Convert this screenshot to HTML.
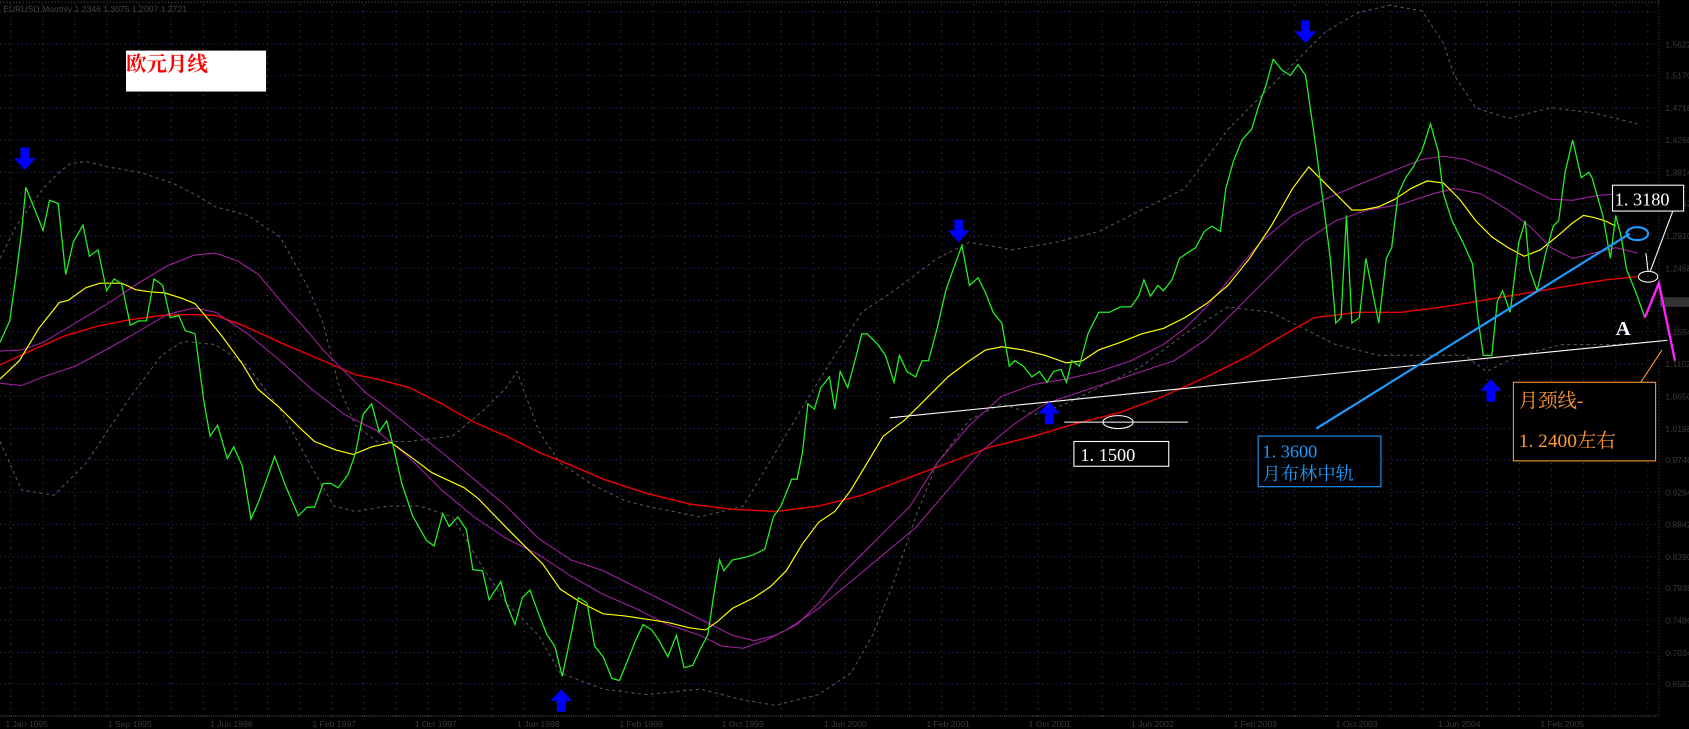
<!DOCTYPE html>
<html><head><meta charset="utf-8"><style>
html,body{margin:0;padding:0;background:#000;overflow:hidden}
svg{display:block}
text{font-family:"Liberation Sans","Noto Sans CJK SC",sans-serif}
.cj{font-family:"Liberation Serif","Noto Serif CJK SC",serif}
</style></head><body>
<svg width="1689" height="729" viewBox="0 0 1568 677" preserveAspectRatio="none" xmlns="http://www.w3.org/2000/svg">
<rect width="1568" height="677" fill="#000"/>
<g stroke="#2a2a6a" stroke-width="1" stroke-dasharray="1,3">
<line x1="0" y1="11" x2="1537" y2="11"/><line x1="0" y1="41" x2="1537" y2="41"/><line x1="0" y1="70" x2="1537" y2="70"/><line x1="0" y1="100" x2="1537" y2="100"/><line x1="0" y1="130" x2="1537" y2="130"/><line x1="0" y1="160" x2="1537" y2="160"/><line x1="0" y1="189" x2="1537" y2="189"/><line x1="0" y1="219" x2="1537" y2="219"/><line x1="0" y1="249" x2="1537" y2="249"/><line x1="0" y1="279" x2="1537" y2="279"/><line x1="0" y1="308" x2="1537" y2="308"/><line x1="0" y1="338" x2="1537" y2="338"/><line x1="0" y1="368" x2="1537" y2="368"/><line x1="0" y1="398" x2="1537" y2="398"/><line x1="0" y1="427" x2="1537" y2="427"/><line x1="0" y1="457" x2="1537" y2="457"/><line x1="0" y1="487" x2="1537" y2="487"/><line x1="0" y1="517" x2="1537" y2="517"/><line x1="0" y1="546" x2="1537" y2="546"/><line x1="0" y1="576" x2="1537" y2="576"/><line x1="0" y1="606" x2="1537" y2="606"/><line x1="0" y1="635" x2="1537" y2="635"/>
</g>
<g id="vg" stroke="#444" stroke-width="1" stroke-dasharray="1,5"></g>
<line x1="0" y1="665" x2="1540" y2="665" stroke="#555" stroke-dasharray="1,1"/>
<line x1="1540" y1="0" x2="1540" y2="665" stroke="#444" stroke-dasharray="1,2"/>
<line x1="0" y1="2" x2="1540" y2="2" stroke="#555" stroke-dasharray="1,2"/>
<text x="3" y="11" font-size="8" fill="#444">EURUSD,Monthly  1.2346  1.3075  1.2007  1.2721</text>
<g font-size="8" fill="#3a3a3a">
<text x="1546" y="44">1.5622</text><text x="1546" y="73">1.5170</text><text x="1546" y="103">1.4718</text><text x="1546" y="133">1.4266</text><text x="1546" y="163">1.3814</text><text x="1546" y="192">1.3362</text><text x="1546" y="222">1.2910</text><text x="1546" y="252">1.2458</text><text x="1546" y="311">1.1554</text><text x="1546" y="341">1.1102</text><text x="1546" y="371">1.0650</text><text x="1546" y="401">1.0198</text><text x="1546" y="430">0.9746</text><text x="1546" y="460">0.9294</text><text x="1546" y="490">0.8842</text><text x="1546" y="520">0.8390</text><text x="1546" y="549">0.7938</text><text x="1546" y="579">0.7486</text><text x="1546" y="609">0.7034</text><text x="1546" y="638">0.6582</text>
<rect x="1541" y="276" width="27" height="9" fill="#333"/>
</g>
<g font-size="8" fill="#3a3a3a">
<text x="5" y="675">1 Jan 1995</text><text x="100" y="675">1 Sep 1995</text><text x="195" y="675">1 Jun 1996</text><text x="290" y="675">1 Feb 1997</text><text x="385" y="675">1 Oct 1997</text><text x="480" y="675">1 Jun 1998</text><text x="575" y="675">1 Feb 1999</text><text x="670" y="675">1 Oct 1999</text><text x="765" y="675">1 Jun 2000</text><text x="860" y="675">1 Feb 2001</text><text x="955" y="675">1 Oct 2001</text><text x="1050" y="675">1 Jun 2002</text><text x="1145" y="675">1 Feb 2003</text><text x="1240" y="675">1 Oct 2003</text><text x="1335" y="675">1 Jun 2004</text><text x="1430" y="675">1 Feb 2005</text>
</g>
<g fill="none" stroke="#555" stroke-width="1" stroke-dasharray="3,3">
<polyline points="0,240 15,210 40,175 55,160 65,152 80,150 100,155 130,160 160,170 180,180 200,192 230,200 260,220 285,265 300,300 315,360 330,395 350,410 380,410 420,405 450,380 470,360 480,345 500,400 520,430 550,450 580,465 600,470 650,480 690,470 720,420 750,370 775,330 800,290 830,270 870,240 900,225 940,232 980,225 1020,215 1060,195 1100,175 1140,120 1170,90 1200,60 1230,30 1260,12 1290,5 1320,10 1340,40 1350,70 1370,100 1400,110 1440,100 1480,105 1520,115"/>
<polyline points="0,410 20,455 50,460 80,430 120,370 150,330 170,317 200,320 230,340 260,380 290,435 310,470 330,475 360,470 390,470 420,480 450,530 470,560 500,590 520,625 560,640 600,645 650,640 690,650 720,655 760,645 790,625 810,590 830,540 850,480 870,430 900,390 930,375 960,385 990,375 1020,360 1060,340 1100,310 1140,285 1180,290 1200,300 1240,320 1280,330 1320,330 1360,330 1380,345 1410,330 1450,320 1500,320 1520,318"/>
</g>
<polyline fill="none" stroke="#ee0000" stroke-width="1.3" points="0,339 30,325 60,312 90,303 120,297 150,293 180,292 200,293 225,302 260,318 300,335 330,348 350,352 380,360 410,375 440,392 470,405 500,420 530,432 560,445 600,458 640,468 680,473 720,475 760,470 800,460 840,445 880,430 920,415 960,405 1000,393 1040,383 1080,368 1120,350 1160,330 1190,312 1220,295 1260,290 1300,290 1340,285 1370,280 1400,275 1430,270 1460,265 1490,260 1520,257"/>
<g fill="none" stroke="#a020a0" stroke-width="1">
<polyline points="0,326 20,325 40,318 70,300 100,282 130,262 155,247 180,237 200,235 220,242 240,255 265,285 285,307 300,325 320,345 340,365 360,380 385,400 410,420 440,445 470,470 500,500 530,520 560,530 590,545 620,560 650,575 680,590 700,595 720,590 740,580 760,560 780,535 800,515 820,495 845,470 870,430 900,395 930,368 960,357 990,352 1020,345 1050,335 1080,320 1100,305 1120,285 1145,255 1170,225 1200,200 1230,185 1260,172 1290,160 1320,148 1340,145 1360,148 1390,160 1420,175 1440,185 1460,186 1480,182 1500,180"/>
<polyline points="0,356 20,358 40,350 70,340 100,324 130,307 155,292 180,286 200,290 230,310 260,335 290,362 320,385 350,400 380,425 410,455 440,480 470,500 500,515 530,535 560,552 590,565 620,580 650,590 670,600 690,602 710,595 730,585 760,565 790,540 820,515 850,490 880,455 910,420 940,395 970,375 1000,365 1030,355 1060,345 1090,335 1120,315 1150,285 1180,255 1210,225 1240,205 1270,195 1300,190 1330,180 1350,175 1375,180 1400,195 1420,210 1440,230 1460,240 1480,235 1500,230 1520,235"/>
</g>
<polyline fill="none" stroke="#ffff00" stroke-width="1.1" points="0,352 18,335 36,305 55,281 63,279 80,267 93,263 113,263 126,269 139,271 153,272 169,277 181,282 192,295 206,312 225,338 239,361 259,378 279,398 292,410 312,418 328,422 345,415 363,411 381,424 401,439 431,453 444,463 471,491 487,507 504,524 520,547 540,560 560,570 580,572 600,575 620,578 640,583 655,585 665,578 680,565 700,555 715,545 730,530 745,505 760,485 775,475 790,455 805,430 820,405 840,390 860,370 880,350 900,335 915,325 930,322 950,325 970,330 990,337 1005,335 1020,325 1040,318 1060,310 1080,305 1100,295 1120,282 1140,265 1160,240 1180,210 1200,175 1215,155 1225,165 1235,175 1245,185 1255,195 1265,195 1280,192 1295,185 1310,175 1325,168 1340,170 1355,185 1370,205 1385,220 1400,230 1415,238 1430,232 1445,220 1460,207 1470,200 1480,202 1490,205 1500,210"/>
<polyline fill="none" stroke="#22ee22" stroke-width="1.2" points="0,318 9,298 15,255 20,216 24,174 30,189 40,214 46,186 54,189 61,255 68,225 77,209 83,238 91,232 99,270 106,259 113,264 121,302 129,298 136,298 143,259 151,265 158,295 166,293 172,307 181,310 184,332 189,371 195,405 202,395 211,426 217,415 225,433 233,482 240,466 255,424 265,451 277,479 285,471 292,471 300,449 307,449 314,453 323,441 330,421 337,385 345,375 352,401 359,391 365,414 373,449 383,479 396,502 403,507 411,477 417,489 425,480 433,492 439,529 448,530 454,557 465,540 470,560 478,580 485,555 492,548 500,570 508,590 515,600 522,628 530,590 537,555 545,560 552,600 560,610 568,630 575,632 582,615 590,595 597,580 605,585 612,595 620,610 628,590 635,620 643,618 650,603 657,590 663,550 668,520 672,530 680,520 690,518 700,515 710,510 718,480 725,470 735,445 740,445 745,420 750,375 756,380 762,360 770,350 775,380 780,345 787,360 795,330 800,310 805,310 815,320 822,330 830,355 835,330 842,345 850,350 856,335 862,335 870,305 878,270 885,250 893,228 900,265 908,258 915,272 922,290 930,300 937,340 942,335 950,340 958,350 965,345 972,355 978,345 985,343 990,355 995,335 1002,340 1010,310 1015,300 1020,290 1030,290 1040,285 1050,285 1057,275 1062,260 1068,275 1075,265 1080,270 1088,260 1095,240 1102,235 1110,230 1118,215 1125,210 1133,215 1138,175 1145,150 1153,130 1162,120 1168,100 1175,80 1182,55 1190,65 1198,70 1205,60 1212,70 1220,125 1228,185 1235,240 1240,300 1245,295 1250,200 1255,300 1262,295 1268,240 1274,270 1280,300 1287,240 1292,230 1298,180 1305,165 1312,155 1320,140 1328,115 1335,140 1340,180 1348,205 1358,225 1367,245 1372,295 1377,330 1385,330 1390,280 1395,270 1402,290 1410,225 1416,205 1420,250 1427,270 1435,235 1442,210 1447,205 1453,160 1460,130 1468,165 1475,160 1478,165 1488,200 1495,240 1500,200 1505,220 1510,250 1520,275 1527,295"/>
<polyline fill="none" stroke="#ff22ff" stroke-width="2.2" points="1527,295 1540,263 1555,335"/>
<line x1="826" y1="388" x2="1548" y2="316" stroke="#fff" stroke-width="1"/>
<line x1="988" y1="392" x2="1103" y2="392" stroke="#fff" stroke-width="1"/>
<ellipse cx="1038" cy="392" rx="14" ry="6" fill="none" stroke="#fff"/>
<rect x="997" y="410" width="88" height="23" fill="#000" stroke="#fff"/>
<text x="1003" y="428" font-size="17" fill="#fff" class="cj">1. 1500</text>
<line x1="1222" y1="398" x2="1513" y2="217" stroke="#1e9bff" stroke-width="2"/>
<ellipse cx="1520" cy="217" rx="10" ry="6" fill="none" stroke="#1e9bff" stroke-width="2"/>
<rect x="1168" y="405" width="114" height="47" fill="#000" stroke="#1e9bff"/>
<text x="1172" y="425" font-size="17" fill="#1e9bff" class="cj">1. 3600</text>
<text x="1172" y="446" font-size="17" fill="#1e9bff" class="cj">月布林中轨</text>
<line x1="1553" y1="196" x2="1532" y2="252" stroke="#fff"/>
<line x1="1528" y1="235" x2="1530" y2="252" stroke="#fff"/>
<ellipse cx="1530" cy="257" rx="9" ry="5" fill="none" stroke="#fff"/>
<rect x="1497" y="172" width="66" height="24" fill="#000" stroke="#fff"/>
<text x="1499" y="191" font-size="17" fill="#fff" class="cj">1. 3180</text>
<text x="1500" y="311" font-size="19" font-weight="bold" fill="#fff" class="cj">A</text>
<line x1="1510" y1="375" x2="1543" y2="325" stroke="#ff9933"/>
<rect x="1405" y="355" width="132" height="73" fill="#000" stroke="#ff9933"/>
<text x="1410" y="378" font-size="18" fill="#ff9933" class="cj">月颈线-</text>
<text x="1410" y="415" font-size="18" fill="#ff9933" class="cj">1. 2400左右</text>
<rect x="117" y="47" width="130" height="38" fill="#fff"/>
<text x="117" y="66" font-size="19" font-weight="bold" fill="#ff0000" class="cj">欧元月线</text>
<g fill="#0000ff">
<path d="M19,137 h8 v10 h6 l-10,11 l-10,-11 h6z"/>
<path d="M886,204 h8 v10 h6 l-10,11 l-10,-11 h6z"/>
<path d="M1208,19 h8 v10 h6 l-10,11 l-10,-11 h6z"/>
<path d="M517,661 h8 v-10 h6 l-10,-11 l-10,11 h6z"/>
<path d="M970,394 h8 v-10 h6 l-10,-11 l-10,11 h6z"/>
<path d="M1380,373 h8 v-10 h6 l-10,-11 l-10,11 h6z"/>
</g>
</svg>
<script>
var g=document.getElementById('vg'),s='';
for(var x=10;x<1540;x+=29.8){s+='<line x1="'+x+'" y1="4" x2="'+x+'" y2="665"/>';}
g.innerHTML=s;
</script>
</body></html>
